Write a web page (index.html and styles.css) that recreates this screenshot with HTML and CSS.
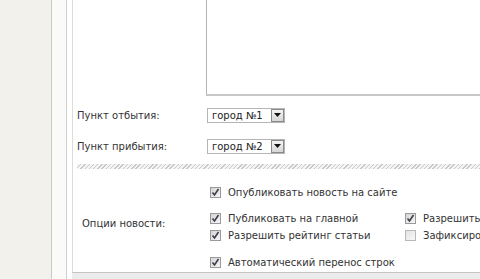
FILE: index.html
```html
<!DOCTYPE html>
<html lang="ru">
<head>
<meta charset="utf-8">
<link rel="stylesheet" href="styles.css">
</head>
<body>
<div class="page">
  <div class="sidebar"></div>
  <div class="gutter"></div>
  <div class="main">
    <div class="panel">
      <div class="row row-text">
        <div class="label"></div>
        <div class="textarea"></div>
      </div>
      <div class="row row-field">
        <div class="label">Пункт отбытия:</div>
        <div class="select"><span class="select-text">город №1</span><span class="select-btn"><svg width="7" height="4" viewBox="0 0 7 4"><path d="M0 0h7L3.5 4z" fill="#111"/></svg></span></div>
      </div>
      <div class="row row-field">
        <div class="label">Пункт прибытия:</div>
        <div class="select"><span class="select-text">город №2</span><span class="select-btn"><svg width="7" height="4" viewBox="0 0 7 4"><path d="M0 0h7L3.5 4z" fill="#111"/></svg></span></div>
      </div>
      <div class="hatch"></div>
      <div class="row row-options">
        <div class="label label-opt">Опции новости:</div>
        <div class="options">
          <div class="check"><span class="box on"><svg width="9" height="9" viewBox="0 0 9 9"><path d="M1.5 4.5l2 2.5 4-6" fill="none" stroke="#3c3c4c" stroke-width="1.6"/></svg></span>Опубликовать новость на сайте</div>
          <div class="group">
            <div class="check"><span class="box on"><svg width="9" height="9" viewBox="0 0 9 9"><path d="M1.5 4.5l2 2.5 4-6" fill="none" stroke="#3c3c4c" stroke-width="1.6"/></svg></span>Публиковать на главной</div>
            <div class="check"><span class="box on"><svg width="9" height="9" viewBox="0 0 9 9"><path d="M1.5 4.5l2 2.5 4-6" fill="none" stroke="#3c3c4c" stroke-width="1.6"/></svg></span>Разрешить комментарии</div>
            <div class="check"><span class="box on"><svg width="9" height="9" viewBox="0 0 9 9"><path d="M1.5 4.5l2 2.5 4-6" fill="none" stroke="#3c3c4c" stroke-width="1.6"/></svg></span>Разрешить рейтинг статьи</div>
            <div class="check"><span class="box off"></span>Зафиксировать новость</div>
          </div>
          <div class="check"><span class="box on"><svg width="9" height="9" viewBox="0 0 9 9"><path d="M1.5 4.5l2 2.5 4-6" fill="none" stroke="#3c3c4c" stroke-width="1.6"/></svg></span>Автоматический перенос строк</div>
        </div>
      </div>
    </div>
    <div class="footer-band"></div>
  </div>
</div>
</body>
</html>
```

FILE: styles.css
```css
html, body {
  margin: 0;
  padding: 0;
  width: 480px;
  height: 279px;
  overflow: hidden;
  background: #f2f1ec;
  font-family: "DejaVu Sans", Verdana, sans-serif;
  font-size: 10px;
  color: #333;
}

.page {
  display: flex;
  height: 279px;
}

.sidebar {
  width: 51px;
  flex: none;
  border-right: 1px solid #c9c9c6;
  background: #f2f1ec;
}

.gutter {
  width: 14px;
  flex: none;
  border-right: 1px solid #cfcfcf;
  background: #fafaf9;
}

.main {
  flex: 1;
  min-width: 0;
  background: #fff;
  padding-left: 5px;
  display: flex;
  flex-direction: column;
  white-space: nowrap;
}

.panel {
  border-left: 1px solid #dcdcdc;
  border-bottom: 1px solid #c4c4c4;
  padding-left: 4px;
  height: 273px;
  box-sizing: border-box;
  overflow: hidden;
}

.footer-band {
  flex: 1;
  background: #ececec;
}

.row {
  display: flex;
  align-items: center;
}

.label {
  width: 129px;
  flex: none;
}

.row-text {
  height: 96px;
  align-items: stretch;
}

.textarea {
  flex: 1;
  border-left: 1px solid #b4b4b4;
  border-bottom: 2px solid #c8c8c8;
  background: #fff;
}

.row-field {
  height: 16px;
  margin-top: 11px;
}
.row-field + .row-field {
  margin-top: 15px;
}

.select {
  display: flex;
  align-items: center;
  width: 78px;
  height: 15px;
  box-sizing: border-box;
  border: 1px solid #b5b5b5;
  background: #fff;
  margin-left: 1px;
}

.select-text {
  flex: 1;
  padding-left: 4px;
  color: #222;
}

.select-btn {
  width: 13px;
  height: 13px;
  box-sizing: border-box;
  border: 1px solid #8a8a8a;
  background: linear-gradient(#f4f4f4, #d6d6d6);
  display: flex;
  align-items: center;
  justify-content: center;
}

.hatch {
  height: 5px;
  margin-top: 10px;
  background: repeating-linear-gradient(-45deg, #c8c8c8 0 1px, #f4f4f4 1px 3px);
}

.row-options {
  height: 103px;
  align-items: flex-start;
}

.label-opt {
  padding-left: 5px;
  padding-top: 6px;
  width: 124px;
  align-self: center;
}

.options {
  display: flex;
  flex-direction: column;
  gap: 9px;
  padding-left: 4px;
  padding-top: 15px;
}

.group {
  display: grid;
  grid-template-columns: 195px auto;
}

.check {
  display: flex;
  align-items: center;
  height: 17px;
}

.options > .check:last-child {
  margin-top: 1px;
}

.box {
  width: 11px;
  height: 11px;
  box-sizing: border-box;
  border: 1px solid #9a9a9a;
  background: linear-gradient(135deg, #d4d4d4, #f6f6f6);
  margin-right: 7px;
  display: flex;
  align-items: center;
  justify-content: center;
  flex: none;
}

.box.off {
  border-color: #b8b8b8;
  background: linear-gradient(135deg, #e2e2e2, #f8f8f8);
}
```
